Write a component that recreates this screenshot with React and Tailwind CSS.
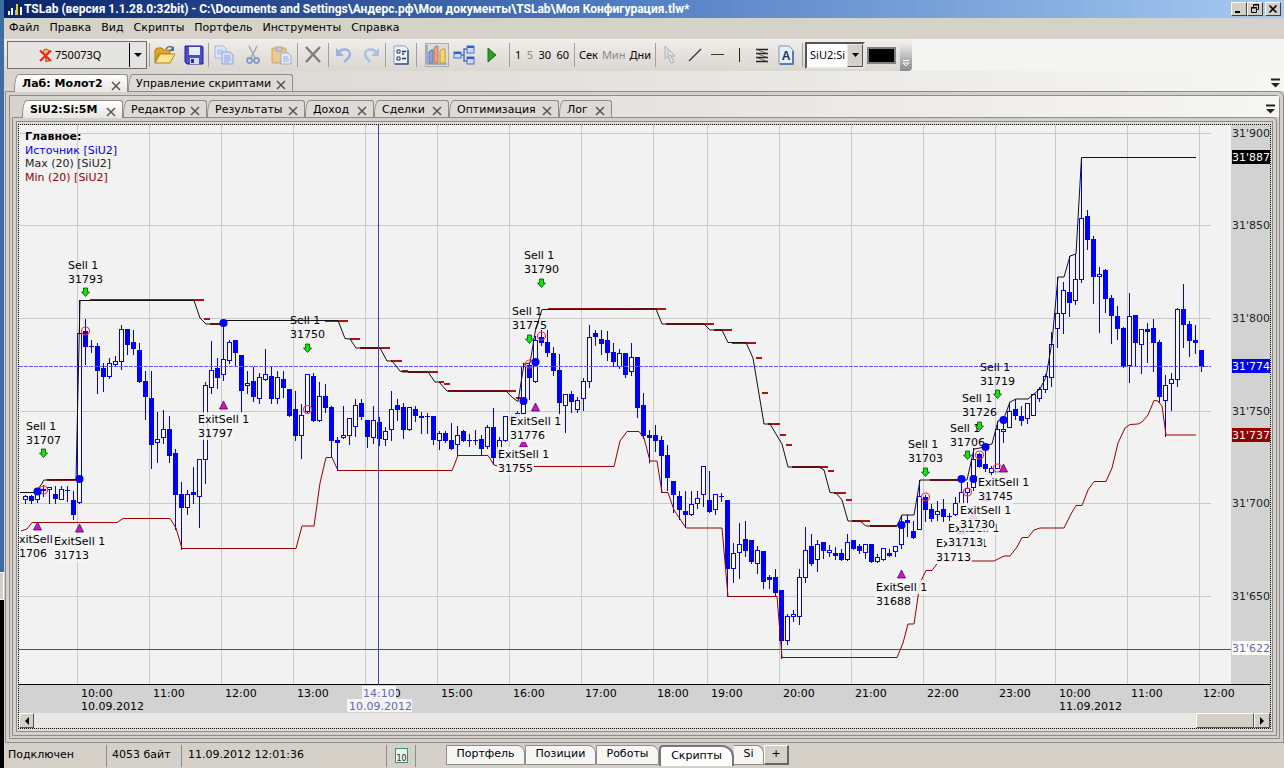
import React from "react";

/* One candle per row: high, body top, body bottom, low, filled (1) or hollow (0). */
const CANDLES = [
  [495,496,499,503,0],[495,496,501,503,1],[488,494,499,502,0],[485,489,491,496,1],[487,487,489,503,0],
  [486,494,499,503,1],[486,489,499,499,0],[486,490,491,501,1],[491,500,515,519,1],[300,333,502,503,0],
  [319,331,347,364,1],[340,346,347,352,1],[343,346,371,393,1],[363,368,377,391,1],[358,363,376,378,0],
  [356,361,364,366,0],[325,329,361,369,0],[329,329,345,354,1],[330,342,349,354,1],[343,350,382,382,1],
  [371,381,397,419,1],[371,398,445,468,1],[412,439,442,462,0],[410,429,437,443,0],[416,429,456,462,1],
  [449,453,495,529,1],[482,494,508,549,1],[490,494,507,514,0],[467,492,495,503,1],[459,459,496,527,0],
  [382,385,459,483,0],[341,370,387,393,0],[358,368,378,388,1],[323,359,374,380,0],[340,342,360,363,0],
  [340,340,353,366,1],[355,355,391,412,1],[371,383,385,393,0],[367,381,397,401,1],[373,377,398,403,0],
  [349,374,379,380,0],[367,376,399,403,1],[371,377,398,403,0],[371,379,388,397,1],[389,389,416,416,1],
  [391,409,436,440,1],[404,415,435,458,0],[374,374,411,413,0],[373,376,421,421,1],[382,396,420,421,0],
  [384,396,408,412,1],[406,407,441,456,1],[437,440,443,470,1],[406,435,437,438,0],[418,418,435,444,0],
  [399,405,426,436,0],[399,403,417,419,1],[420,420,437,447,1],[406,420,437,443,0],[417,422,439,445,1],
  [427,431,439,445,0],[391,409,429,440,0],[399,405,410,420,1],[403,407,430,438,1],[407,407,429,430,0],
  [406,409,416,421,1],[412,416,418,433,1],[413,416,417,433,1],[416,416,440,444,1],[431,433,440,449,0],
  [431,433,441,442,1],[423,440,449,449,1],[426,435,444,455,0],[430,431,441,441,1],[434,440,441,446,1],
  [430,440,441,444,1],[435,439,449,455,1],[425,427,446,448,0],[408,427,458,464,1],[437,440,453,460,0],
  [416,416,440,441,0],[414,416,420,420,0],[411,413,415,416,0],[363,366,413,414,0],[363,365,378,399,1],
  [336,340,381,382,0],[330,337,343,345,1],[330,342,353,356,1],[347,353,371,375,1],[354,370,403,415,1],
  [394,394,405,432,0],[391,394,402,412,1],[397,400,409,412,0],[378,381,398,410,0],[325,337,381,387,0],
  [330,333,337,345,1],[330,339,344,354,1],[331,340,353,360,1],[343,352,362,366,1],[349,353,366,368,0],
  [353,353,375,377,1],[343,357,371,375,0],[357,357,408,417,1],[393,405,436,438,1],[430,435,438,462,1],
  [425,435,441,451,1],[436,440,456,492,1],[445,455,478,490,1],[481,481,495,512,1],[491,496,510,519,1],
  [491,511,515,527,1],[491,504,514,515,0],[491,498,503,508,0],[466,466,494,506,0],[471,500,512,512,1],
  [494,494,509,514,0],[493,496,497,501,1],[500,500,569,596,1],[543,553,568,582,0],[523,544,552,578,0],
  [521,539,551,556,1],[540,540,562,563,1],[546,550,563,573,0],[551,551,582,588,1],[575,577,580,588,1],
  [569,577,593,595,1],[590,590,641,658,1],[614,616,640,644,0],[610,614,616,621,0],[569,577,616,624,0],
  [527,550,577,582,0],[534,546,564,565,1],[540,544,559,571,0],[542,542,551,558,1],[545,550,552,556,0],
  [547,553,556,559,1],[549,553,560,560,1],[534,542,559,560,0],[540,540,549,549,1],[544,546,551,553,1],
  [544,544,552,558,0],[544,544,562,562,1],[554,557,561,562,0],[548,548,559,560,0],[549,553,556,556,1],
  [546,546,551,556,0],[515,525,544,548,0],[515,520,523,536,1],[521,531,538,538,1],[480,496,529,529,0],
  [495,497,510,521,1],[504,509,519,521,1],[501,511,514,520,0],[499,509,517,521,1],[513,516,517,520,1],
  [497,503,514,515,0],[479,492,503,503,0],[482,488,492,503,0],[448,459,487,490,0],[453,454,467,467,1],
  [447,464,469,471,1],[466,468,472,476,0],[421,429,468,468,0],[423,429,431,442,0],[402,411,427,427,0],
  [399,409,416,419,1],[406,416,421,425,1],[403,403,418,423,0],[394,394,415,415,0],[387,389,398,401,0],
  [374,376,389,392,0],[332,344,377,386,0],[277,313,328,347,0],[282,290,313,333,0],[256,292,303,316,1],
  [254,279,300,304,0],[158,218,279,282,0],[210,216,240,249,1],[236,239,277,303,1],[267,274,276,332,0],
  [269,270,299,312,1],[295,298,316,343,1],[306,316,329,339,1],[327,328,367,367,1],[293,316,365,382,0],
  [315,315,343,365,1],[329,329,344,373,0],[323,329,332,362,1],[319,328,343,371,1],[340,342,397,402,1],
  [375,385,400,436,0],[373,379,383,410,0],[308,309,379,386,0],[284,309,325,347,1],[321,324,341,356,1],
  [325,340,343,353,1],[350,350,367,371,1],
];

const MAX_LINE =
  "20,492.5 35,492.5 41,485 44,480 76,479.5 80,300.5 194,300.5 200,318 206,324 220,324 226,320.5 338,320.5 345,338.5 350,339 356,348 380,348 387,361 392,361 400,371 403,372 428,372 435,382 439,382 447,391 506,391 513,398 518,401.5 524,364 530,363 535.5,330 542,309.5 656,309 662,324 704,324 710,330 722,330 728,342.5 746,342.5 753,358 764,424 770,424 782,444 788,467 819,467 824,470 830,492.5 836,493 842,500 848,521 860,521 866,526 897,526 902,515 914,515 920,480 967,480 974,449 980,448 987,445 992,444 998,421 1004,418 1010,402 1016,399 1028,399 1040,389 1046,377 1052,342 1058,277 1064,277 1070,256 1076,254 1081.5,157.5 1196,157.5";

const MIN_LINE =
  "21,531 27,529 32,522.5 117,522.5 123,518.5 170,518.5 176,528 182,548.5 296,548.5 302,526 314,526 320,483 326,457.5 332,457.5 338,470.5 452,470.5 458,455.5 488,455.5 494,465 499,466.5 614,466.5 620,441 627,431.5 639,431.5 644,438 650,461 657,461 662,492.5 668,492.5 674,510 686,528 722,528 728,596.5 777,596.5 782,657.5 897,657.5 903,643 908,624 914,624 920,583 926,570.5 932,570.5 939,561 994,561 1004,556 1010,556 1017,547 1022,537.5 1028,537.5 1034,530 1040,528 1064,528 1071,514 1076,505.5 1082,505.5 1088,490 1094,481.5 1106,481.5 1112,468 1118,443 1125,428 1130,424.5 1138,424 1142,422 1148,415 1154,400.5 1158,401 1162,406 1166,435 1196,435";

/* Level dashes over the upper line: x start, x end, y. */
const DASHES = [
  [47,76,480],[90,204,300],[204,210,319],[210,220,324],[325,348,321],[350,360,339],[360,390,348],
  [391,402,361],[402,408,371],[408,438,372],[439,444,382],[444,450,384],[448,516,391],[516,522,398],
  [548,666,309],[666,714,324],[714,732,330],[732,756,343],[756,762,358],[762,768,393],[768,780,424],
  [780,786,435],[786,792,445],[792,828,467],[828,834,471],[834,846,493],[846,852,500],[852,870,521],
  [870,897,526],[930,960,480],
];

const GRID_X = [77,149,221,293,365,437,509,581,653,707,779,851,923,995,1055,1127,1199];
const PRICES = [[133,"31'900"],[225,"31'850"],[318,"31'800"],[411,"31'750"],[503,"31'700"],[596,"31'650"]];
const HOURS = ["10:00","11:00","12:00","13:00","14:00","15:00","16:00","17:00","18:00","19:00","20:00","21:00","22:00","23:00","10:00","11:00","12:00"];

/* Label x, first baseline, price, marker x, marker y. */
const SELLS = [
  [26,430,"31707",43.5,453],[68,269,"31793",85.5,292],[290,324,"31750",307.5,348],[512,315,"31775",529.5,339],
  [524,259,"31790",541.5,283],[908,448,"31703",925.5,472],[950,432,"31706",967.5,455],[962,402,"31726",979.5,426],
  [980,371,"31719",997.5,394],
];
const EXITS = [
  [12,543,"31706",37.5,526],[54,545,"31713",79.5,528],[198,423,"31797",223.5,405],[498,458,"31755",523.5,443],
  [510,425,"31776",535.5,407],[876,591,"31688",901.5,574],[936,547,"31713",961.5,530],[948,532,"31713",973.5,515],
  [960,514,"31730",985.5,497],[978,486,"31745",1003.5,468],
];
const DOTS = [[37.5,491.5],[79.5,479],[223.5,323],[523.5,401],[535.5,362],[901.5,525],[961.5,479],[973.5,479],[985.5,447],[1003.5,420]];
const RINGS = [[43.5,490],[85.5,331],[307.5,409.5],[529.5,364],[541.5,336],[925.5,497],[967.5,492],[979.5,455],[997.5,468]];

function Candle({ i, c }) {
  const x = 25 + 6 * i;
  const [hi, top, bot, lo, filled] = c;
  return (
    <g>
      <rect x={x} y={hi} width="1" height={Math.max(1, lo - hi + 1)} fill="#0000fa" />
      {filled ? (
        <rect x={x - 2} y={top} width="5" height={Math.max(1, bot - top)} fill="#0000fa" />
      ) : (
        <rect x={x - 1.5} y={top + 0.5} width="4" height={Math.max(1, bot - top)} fill="#fbfbfb" stroke="#0000fa" />
      )}
    </g>
  );
}

function PriceTag({ y, text, bg, fg }) {
  return (
    <g>
      <rect x="1232" y={y - 7} width="38" height="14" fill={bg} />
      <text x="1232" y={y + 4} fill={fg}>{text}</text>
    </g>
  );
}

function Chart() {
  return (
    <svg
      viewBox="19 125 1251 588"
      className="block h-auto w-full font-['DejaVu_Sans',Verdana,sans-serif] text-[11px]"
      role="img"
      aria-label="SiU2 5M"
    >
      <rect x="19" y="125" width="1251" height="588" fill="#d2d2d2" />
      <rect x="19" y="125" width="1212" height="559" fill="#f2f2f2" />
      <g fill="#c9c9c9">
        {GRID_X.map((x) => <rect key={x} x={x} y="125" width="1" height="559" />)}
        {PRICES.map(([y]) => <rect key={y} x="20" y={y} width="1191" height="1" />)}
      </g>
      <rect x="19" y="684" width="1251" height="1" fill="#000" />
      {CANDLES.map((c, i) => <Candle key={i} i={i} c={c} />)}
      <line x1="19" x2="1211" y1="366.5" y2="366.5" stroke="#5a5aff" strokeDasharray="4 1" />
      <polyline points={MIN_LINE} fill="none" stroke="#990000" />
      {DASHES.map(([a, b, y]) => <rect key={a} x={a} y={y - 1} width={b - a} height="2" fill="#a81414" />)}
      <polyline points={MAX_LINE} fill="none" stroke="#111" />
      {RINGS.map(([x, y]) => <circle key={x} cx={x} cy={y} r="4" fill="none" stroke="#ff3030" strokeWidth="1.2" />)}
      {DOTS.map(([x, y]) => <circle key={x} cx={x} cy={y} r="4" fill="#0000fa" />)}
      {EXITS.map(([x, y, price, mx, my]) => (
        <g key={x}>
          <path d={`M${mx} ${my - 4}l4 8h-8z`} fill="#e800e8" stroke="#222" strokeWidth=".8" />
          <rect x={x - 1} y={y - 11} width="54" height="14" fill="#f6f6f6" opacity=".85" />
          <rect x={x - 1} y={y + 3} width="37" height="14" fill="#f6f6f6" opacity=".85" />
          <text x={x} y={y}>ExitSell 1</text>
          <text x={x} y={y + 14}>{price}</text>
        </g>
      ))}
      {SELLS.map(([x, y, price, mx, my]) => (
        <g key={x}>
          <text x={x} y={y}>Sell 1</text>
          <text x={x} y={y + 14}>{price}</text>
          <path d={`M${mx - 2} ${my - 4}h4v4h2l-4 4.500l-4 -4.500h2z`} fill="#00f000" stroke="#1a3a1a" strokeWidth=".8" />
        </g>
      ))}
      <rect x="378" y="125" width="1" height="560" fill="#4040c0" />
      <rect x="19" y="649" width="1212" height="1" fill="#4a4a9a" />

      <text x="25" y="140" fontWeight="bold">Главное:</text>
      <text x="25" y="154" fill="#0000f0">Источник [SiU2]</text>
      <text x="25" y="167" fill="#222">Max (20) [SiU2]</text>
      <text x="25" y="181" fill="#990000">Min (20) [SiU2]</text>

      {PRICES.map(([y, t]) => <text key={t} x="1232" y={y + 4} fill="#222">{t}</text>)}
      <PriceTag y={157} text="31'887" bg="#000" fg="#fff" />
      <PriceTag y={366} text="31'774" bg="#0000e6" fg="#fff" />
      <PriceTag y={435} text="31'737" bg="#900000" fg="#fff" />
      <PriceTag y={648} text="31'622" bg="#fff" fg="#6666b8" />

      {GRID_X.map((x, i) => <text key={x} x={x + 4} y="697">{HOURS[i]}</text>)}
      <text x="81" y="710">10.09.2012</text>
      <text x="1059" y="710">11.09.2012</text>
      <rect x="362" y="686" width="34" height="13" fill="#f4f4f4" />
      <rect x="347" y="699" width="65" height="13" fill="#f4f4f4" />
      <text x="363" y="697" fill="#6666b8">14:10</text>
      <text x="349" y="710" fill="#6666b8">10.09.2012</text>
    </svg>
  );
}

function Svg({ w = 20, h = 20, children }) {
  return <svg width={w} height={h} viewBox={`0 0 ${w} ${h}`} className="block shrink-0" aria-hidden="true">{children}</svg>;
}

const KeyIcon = () => (
  <Svg w={13} h={15}>
    <circle cx="7" cy="4" r="3" fill="#e8c060" stroke="#9a6a20" />
    <path d="M7 6v8M7 13h3" stroke="#b08030" strokeWidth="2" />
    <path d="M1 2.500L12 13M12 2.500L1 13" stroke="#f02020" strokeWidth="2.200" />
  </Svg>
);
const OpenIcon = () => (
  <Svg w={22}>
    <path d="M1 5l2-2h5l2 2h6v4H5l-4 9z" fill="#e0a828" stroke="#a87818" />
    <path d="M1 18L6 9h15l-5 9z" fill="#fbe48c" stroke="#b08820" />
    <path d="M12 4c2-3 5-3 7-1" fill="none" stroke="#4a6aa8" strokeWidth="1.500" />
    <path d="M20 1v5h-5z" fill="#4a6aa8" />
  </Svg>
);
const SaveIcon = () => (
  <Svg>
    <path d="M1 1h17l1 1v17H3l-2-2z" fill="#4a50cc" stroke="#202088" />
    <rect x="5" y="2" width="11" height="8" fill="#e8ecfa" />
    <rect x="6" y="13" width="9" height="6" fill="#d8dcf0" />
    <rect x="7" y="14" width="3" height="4" fill="#303098" />
  </Svg>
);
const CopyIcon = () => (
  <Svg w={22}>
    <path d="M2 1h8l3 3v9H2z" fill="#dfe8f8" stroke="#a2b6e0" />
    <path d="M4 5h6M4 7h7M4 9h7" stroke="#a2b6e0" />
    <path d="M9 7h8l3 3v9H9z" fill="#d2e0f6" stroke="#8ea6d8" />
    <path d="M11 11h6M11 13h7M11 15h7M11 17h5" stroke="#8ea6d8" />
  </Svg>
);
const CutIcon = () => (
  <Svg w={14}>
    <path d="M3 1l6 12M11 1L5 13" stroke="#a4a8b0" strokeWidth="1.600" />
    <circle cx="3.500" cy="15.500" r="2.500" fill="none" stroke="#8498c4" strokeWidth="1.800" />
    <circle cx="10.500" cy="15.500" r="2.500" fill="none" stroke="#8498c4" strokeWidth="1.800" />
  </Svg>
);
const PasteIcon = () => (
  <Svg w={22}>
    <rect x="1" y="3" width="14" height="15" rx="1" fill="#ecc88c" stroke="#c8a468" />
    <path d="M5 2h6v4H5z" fill="#c8c8d0" stroke="#a4a4b0" />
    <path d="M10 8h7l3 3v8H10z" fill="#e4ecf8" stroke="#9cacd0" />
    <path d="M12 12h5M12 14h6M12 16h6" stroke="#9cacd0" />
  </Svg>
);
const DeleteIcon = () => (
  <Svg w={18}><path d="M2 2l14 15M16 2L2 17" stroke="#7e7e7e" strokeWidth="2.500" /></Svg>
);
const UndoIcon = () => (
  <Svg w={17}>
    <path d="M3 9c2-6 12-6 12 0 0 4-4 6-6 8" fill="none" stroke="#9cb2e4" strokeWidth="2.500" />
    <path d="M1 3v8h8z" fill="#9cb2e4" />
  </Svg>
);
const RedoIcon = () => (
  <Svg w={17}>
    <path d="M14 9C12 3 2 3 2 9c0 4 4 6 5 8" fill="none" stroke="#acbee6" strokeWidth="2.500" />
    <path d="M16 3v8H8z" fill="#acbee6" />
  </Svg>
);
const PropsIcon = () => (
  <Svg w={16}>
    <path d="M1 1h11l3 3v15H1z" fill="#eaf2fc" stroke="#88a2c4" />
    <path d="M15 5v14H2" fill="none" stroke="#3c5a88" strokeWidth="1.500" />
    <path d="M4 5h3v3H4zM4 12h3v3H4z" fill="#fff" stroke="#334" />
    <path d="M9 6.500h4M9 9h2M9 13.500h4" stroke="#334" strokeWidth="1.500" />
  </Svg>
);
const BarsIcon = () => (
  <Svg w={22} h={22}>
    <path d="M1 1v19h20" fill="none" stroke="#6a80a8" />
    <path d="M3 8l2-2h2v13H3z" fill="#88a4e0" stroke="#5c78b8" />
    <path d="M8 4l2-2h2v17H8z" fill="#f0a080" stroke="#c07858" />
    <path d="M14 7l2-2h3v14h-5z" fill="#f4d868" stroke="#b89c48" />
  </Svg>
);
const FlowIcon = () => (
  <Svg w={22}>
    <path d="M7 10h4V4h4M11 10v6h4" fill="none" stroke="#5070b8" strokeWidth="1.500" />
    <rect x="1" y="7" width="7" height="6" fill="#c8dcfc" stroke="#4c70cc" />
    <rect x="14" y="1" width="7" height="7" fill="#c8dcfc" stroke="#4c70cc" />
    <rect x="14" y="12" width="7" height="7" fill="#c8dcfc" stroke="#4c70cc" />
    <path d="M1 8h7M14 2h7M14 13h7" stroke="#2f5cd8" strokeWidth="2" />
  </Svg>
);
const PlayIcon = () => <Svg w={10} h={16}><path d="M1 1l8 7-8 7z" fill="#28a028" stroke="#187018" /></Svg>;
const CursorIcon = () => (
  <Svg w={14}>
    <path d="M2 1v13l3-3 3 7 3-1-3-6h4z" fill="#e2e2e2" stroke="#b0b0b0" />
    <path d="M5 5v7l2-2 3 4" fill="none" stroke="#a8b8d8" />
  </Svg>
);
const LineIcon = () => <Svg w={14}><path d="M1 16L13 4" stroke="#333" strokeWidth="1.300" /></Svg>;
const HLineIcon = () => <Svg w={13}><path d="M0 9.500h13" stroke="#333" /></Svg>;
const VLineIcon = () => <Svg w={3}><path d="M1.500 3v14" stroke="#222" /></Svg>;
const FibIcon = () => (
  <Svg w={14}>
    <path d="M1 4.500h12M1 8.500h12M1 12.500h12M1 16.500h12" stroke="#222" strokeWidth="1.300" />
    <path d="M1 4l12 5M1 8l12 5M1 12l12 5" stroke="#444" strokeWidth=".8" />
  </Svg>
);
const TextIcon = () => (
  <Svg w={16}>
    <path d="M1 1h10l4 4v14H1z" fill="#e4effc" stroke="#7898c0" />
    <path d="M15 6v13H2" fill="none" stroke="#3c68a0" strokeWidth="1.500" />
    <text x="8" y="15" textAnchor="middle" fontSize="12" fontWeight="bold" fontFamily="Liberation Sans" fill="#1c3458">A</text>
  </Svg>
);

function Tool({ label, width, pressed, children }) {
  return (
    <button type="button" aria-label={label} className={`flex h-6 shrink-0 items-center justify-center ${width} ${pressed ? "border border-[#a8acb0] bg-[#dcdcdc]" : ""}`}>
      {children}
    </button>
  );
}
const Sep = () => <span className="h-6 w-px shrink-0 bg-[#a0a0a0]" />;

function CloseX() {
  return (
    <svg width="10" height="10" viewBox="0 0 10 10" className="mt-1 shrink-0" aria-hidden="true">
      <path d="M1 1l8 8M9 1l-8 8" stroke="#555" strokeWidth="1.500" />
    </svg>
  );
}

function Tab({ text, width, active }) {
  return (
    <button
      type="button"
      role="tab"
      aria-selected={!!active}
      className={`flex h-[17px] shrink-0 items-center justify-between whitespace-nowrap rounded-tl-[5px_15px] rounded-tr-[3px] border border-b-0 border-[#8c8c8c] pl-[7px] pr-[6px] leading-none ${width} ${
        active ? "relative -mb-px h-[18px] bg-gradient-to-b from-white to-[#e8e6e2] font-bold" : "bg-[#dedbd6]"
      }`}
    >
      {text}
      <CloseX />
    </button>
  );
}

function TabMenu() {
  return (
    <button type="button" aria-label="Список вкладок" className="mb-[3px] ml-auto">
      <Svg w={9} h={10}><path d="M0 1.500h9" stroke="#222" strokeWidth="2" /><path d="M0 5h9L4.500 9.500z" fill="#222" /></Svg>
    </button>
  );
}

function WinButton({ label, className, children }) {
  return (
    <button type="button" aria-label={label} className={`flex h-[14px] w-4 items-center justify-center border border-b-[#404040] border-l-white border-r-[#404040] border-t-white bg-[#d4d0c8] ${className}`}>
      <Svg w={10} h={10}>{children}</Svg>
    </button>
  );
}

const MENU = ["Файл", "Правка", "Вид", "Скрипты", "Портфель", "Инструменты", "Справка"];

export default function App() {
  return (
    <div className="flex min-h-screen bg-[#d4d0c8] font-['DejaVu_Sans',Verdana,sans-serif] text-[11px] text-black">
      <div className="flex w-1 shrink-0 flex-col bg-black">
        <div className="h-[572px] bg-[#3a6ea5]" />
        <div className="h-[28px] border border-l-0 border-white bg-[#d4d0c8]" />
      </div>

      <div className="flex min-w-0 flex-1 flex-col">
        <header className="flex h-[18px] items-center bg-gradient-to-r from-[#0a246a] via-[#5580c4] to-[#a6caf0] pl-[3px] pr-[3px]">
          <Svg w={15} h={14}>
            <path d="M1 9h2v4H1zM4 6h2v7H4z" fill="#fff" />
            <path d="M8 8h2v5H8z" fill="#8cc8f0" />
            <path d="M9 2h2v11H9z" fill="#f0c820" />
            <path d="M13 5h2v8h-2z" fill="#fff" />
          </Svg>
          <h1 className="ml-[2px] flex-1 truncate font-[Roboto,Tahoma,sans-serif] text-[12px] font-bold leading-4 text-white">
            TSLab (версия 1.1.28.0:32bit) - C:\Documents and Settings\Андерс.рф\Мои документы\TSLab\Моя Конфигурация.tlw*
          </h1>
          <WinButton label="Свернуть" className=""><path d="M1 8h5" stroke="#000" strokeWidth="2" /></WinButton>
          <WinButton label="Восстановить" className="mr-[2px]">
            <path d="M3.500 3V.5h5v5H6M3 1h6" fill="none" stroke="#000" />
            <path d="M1.500 3.500h5v5h-5zM1 4h6" fill="none" stroke="#000" />
          </WinButton>
          <WinButton label="Закрыть" className=""><path d="M1.500 1.500l7 7M8.500 1.500l-7 7" stroke="#000" strokeWidth="1.600" /></WinButton>
        </header>

        <nav className="flex h-[21px] items-center gap-[10px] bg-[#d6d2ca] pl-[5px]">
          {MENU.map((m) => <button key={m} type="button">{m}</button>)}
        </nav>

        <div className="flex flex-col bg-gradient-to-r from-[#d6d3cd] via-[#e6e4e0] to-[#f6f6f5]">
          <div className="flex h-8 items-center bg-[#f4f4f3]">
            <div role="toolbar" aria-label="Панель инструментов" className="flex h-8 items-center rounded-r bg-gradient-to-b from-[#f0eeea] to-[#dad6d0] pl-[3px] font-['Noto_Sans',Tahoma,sans-serif]">
              <label className="mr-[2px] flex h-7 w-[140px] items-center border border-[#6e6e6e] bg-[#e6e4e0] pl-[31px]">
                <KeyIcon />
                <select aria-label="Счёт" className="ml-[3px] w-[74px] appearance-none bg-transparent outline-none"><option>750073Q</option></select>
                <span className="h-6 w-px bg-black" />
                <span className="flex flex-1 justify-center"><Svg w={8} h={4}><path d="M0 0h8L4 4z" /></Svg></span>
              </label>
              <Sep />
              <Tool label="Открыть" width="w-[30px]"><OpenIcon /></Tool>
              <Tool label="Сохранить" width="w-7"><SaveIcon /></Tool>
              <Sep />
              <Tool label="Копировать" width="w-[30px]"><CopyIcon /></Tool>
              <Tool label="Вырезать" width="w-7"><CutIcon /></Tool>
              <Tool label="Вставить" width="w-[30px]"><PasteIcon /></Tool>
              <Sep />
              <Tool label="Удалить" width="w-[30px]"><DeleteIcon /></Tool>
              <Sep />
              <Tool label="Отменить" width="w-7"><UndoIcon /></Tool>
              <Tool label="Вернуть" width="w-7"><RedoIcon /></Tool>
              <Sep />
              <Tool label="Свойства" width="w-[30px]"><PropsIcon /></Tool>
              <Sep />
              <span className="w-2" />
              <Tool label="График" width="w-6" pressed><BarsIcon /></Tool>
              <Tool label="Редактор" width="w-[30px]"><FlowIcon /></Tool>
              <Tool label="Запустить" width="w-[26px]"><PlayIcon /></Tool>
              <span className="w-1" />
              <Sep />
              <div className="flex w-16 items-center justify-between px-[5px]">
                <button type="button">1</button>
                <button type="button" className="text-[#8a8a8a]">5</button>
                <button type="button">30</button>
                <button type="button">60</button>
              </div>
              <Sep />
              <div className="flex w-20 items-center justify-between px-[4px]">
                <button type="button">Сек</button>
                <button type="button" className="text-[#8a8a8a]">Мин</button>
                <button type="button">Дни</button>
              </div>
              <Sep />
              <Tool label="Указатель" width="w-7"><CursorIcon /></Tool>
              <Tool label="Линия" width="w-[22px]"><LineIcon /></Tool>
              <Tool label="Горизонтальная линия" width="w-[22px]"><HLineIcon /></Tool>
              <Tool label="Вертикальная линия" width="w-[22px]"><VLineIcon /></Tool>
              <Tool label="Уровни" width="w-6"><FibIcon /></Tool>
              <Tool label="Текст" width="w-6"><TextIcon /></Tool>
              <span className="w-1" />
              <Sep />
              <label className="ml-[2px] flex h-[27px] w-[60px] items-stretch border-2 border-b-[#e8e6e2] border-l-[#555] border-r-[#e8e6e2] border-t-[#555] bg-white">
                <select aria-label="Инструмент" className="w-[40px] appearance-none bg-white pl-[3px] outline-none"><option>SiU2:Si</option></select>
                <span className="flex flex-1 items-center justify-center border border-b-[#555] border-l-[#e8e8e8] border-r-[#555] border-t-[#e8e8e8] bg-[#d4d0c8]">
                  <Svg w={7} h={4}><path d="M0 0h7L3.500 4z" /></Svg>
                </span>
              </label>
              <button type="button" aria-label="Цвет" className="ml-[2px] h-[17px] w-[29px] border-2 border-[#808080] bg-black" />
              <button type="button" aria-label="Ещё" className="ml-1 flex h-[28px] w-3 items-end justify-center self-end rounded-br bg-gradient-to-b from-[#ececec] to-[#8c8c8c] pb-1">
                <Svg w={8} h={8}><path d="M1 1.500h6" stroke="#fff" /><path d="M1 4h6L4 7z" fill="none" stroke="#fff" /></Svg>
              </button>
            </div>
          </div>

          <div role="tablist" className="flex h-5 items-end pl-[10px] pr-1">
            <Tab text="Лаб: Молот2" width="w-[114px]" active />
            <Tab text="Управление скриптами" width="w-[165px]" />
            <TabMenu />
          </div>
        </div>

        <main className="ml-px rounded-tr-md border border-[#8c8c8c] bg-[#d4d0cc] p-[3px]">
          <div className="rounded-tr border border-[#8c8c8c] bg-[#d4d0c8]">
            <div role="tablist" className="flex h-[21px] items-end bg-gradient-to-r from-[#d6d3cd] via-[#e6e4e0] to-[#f6f6f5] pl-3 pr-1">
              <Tab text="SiU2:Si:5M" width="w-[101px]" active />
              <Tab text="Редактор" width="w-[84px]" />
              <Tab text="Результаты" width="w-[98px]" />
              <Tab text="Доход" width="w-[69px]" />
              <Tab text="Сделки" width="w-[75px]" />
              <Tab text="Оптимизация" width="w-[110px]" />
              <Tab text="Лог" width="w-[53px]" />
              <TabMenu />
            </div>
            <div className="mx-[2px] mb-[2px] rounded-tr border border-[#8c8c8c] bg-[#d4d0cc] p-[3px]">
              <div className="border border-[#8c8c8c] bg-[#dedbd4] px-px pb-[2px] pt-[2px]">
                <div className="border border-dotted border-black">
                  <Chart />
                  <div className="flex h-[15px] items-stretch bg-[#eae8e4]">
                    <button type="button" aria-label="Влево" className="flex w-[15px] items-center justify-center border border-b-[#555] border-l-white border-r-[#555] border-t-white bg-[#d4d0c8]">
                      <Svg w={4} h={8}><path d="M4 0v8L0 4z" /></Svg>
                    </button>
                    <span className="flex-1" />
                    <span className="w-[58px] border border-b-[#555] border-l-white border-r-[#555] border-t-white bg-[#d4d0c8]" />
                    <button type="button" aria-label="Вправо" className="flex w-4 items-center justify-center border border-b-[#555] border-l-white border-r-[#555] border-t-white bg-[#d4d0c8]">
                      <Svg w={4} h={8}><path d="M0 0v8l4-4z" /></Svg>
                    </button>
                  </div>
                </div>
              </div>
            </div>
          </div>
        </main>

        <footer className="flex h-[25px] items-center">
          <span className="w-[102px] pl-1">Подключен</span>
          <span className="flex h-[22px] w-[75px] items-center border-l border-[#8c8c8c] pl-[5px]">4053 байт</span>
          <span className="flex h-[22px] w-[205px] items-center border-l border-[#8c8c8c] pl-[6px]">11.09.2012 12:01:36</span>
          <span className="flex h-[22px] w-[30px] items-center justify-center border-x border-[#8c8c8c]">
            <svg width="13" height="15" viewBox="0 0 13 15" aria-hidden="true">
              <rect x=".5" y=".5" width="12" height="14" fill="#e8f4ec" stroke="#4c9050" />
              <text x="6.500" y="13" textAnchor="middle" fontSize="8" fill="#223">10</text>
            </svg>
          </span>
          <div role="tablist" className="ml-[30px] flex h-[22px] items-start">
            {[["Портфель", "w-[79px]"], ["Позиции", "w-[71px]"], ["Роботы", "w-[63px]"]].map(([t, w]) => (
              <button key={t} type="button" role="tab" aria-selected="false" className={`h-5 rounded-tr-lg border border-[#8c8c8c] bg-[#f6f6f5] ${w}`}>{t}</button>
            ))}
            <button type="button" role="tab" aria-selected="true" className="h-[21px] w-[75px] rounded-tl-sm rounded-tr-xl border-2 border-b-0 border-[#777] bg-white">Скрипты</button>
            <button type="button" role="tab" aria-selected="false" className="h-5 w-[30px] rounded-tr-lg border border-l-0 border-[#8c8c8c] bg-[#f6f6f5]">Si</button>
            <button type="button" aria-label="Добавить" className="flex h-5 w-[25px] items-center justify-center border border-b-2 border-r-2 border-b-[#666] border-l-white border-r-[#666] border-t-white bg-[#d4d0c8]">+</button>
          </div>
        </footer>
      </div>
    </div>
  );
}
